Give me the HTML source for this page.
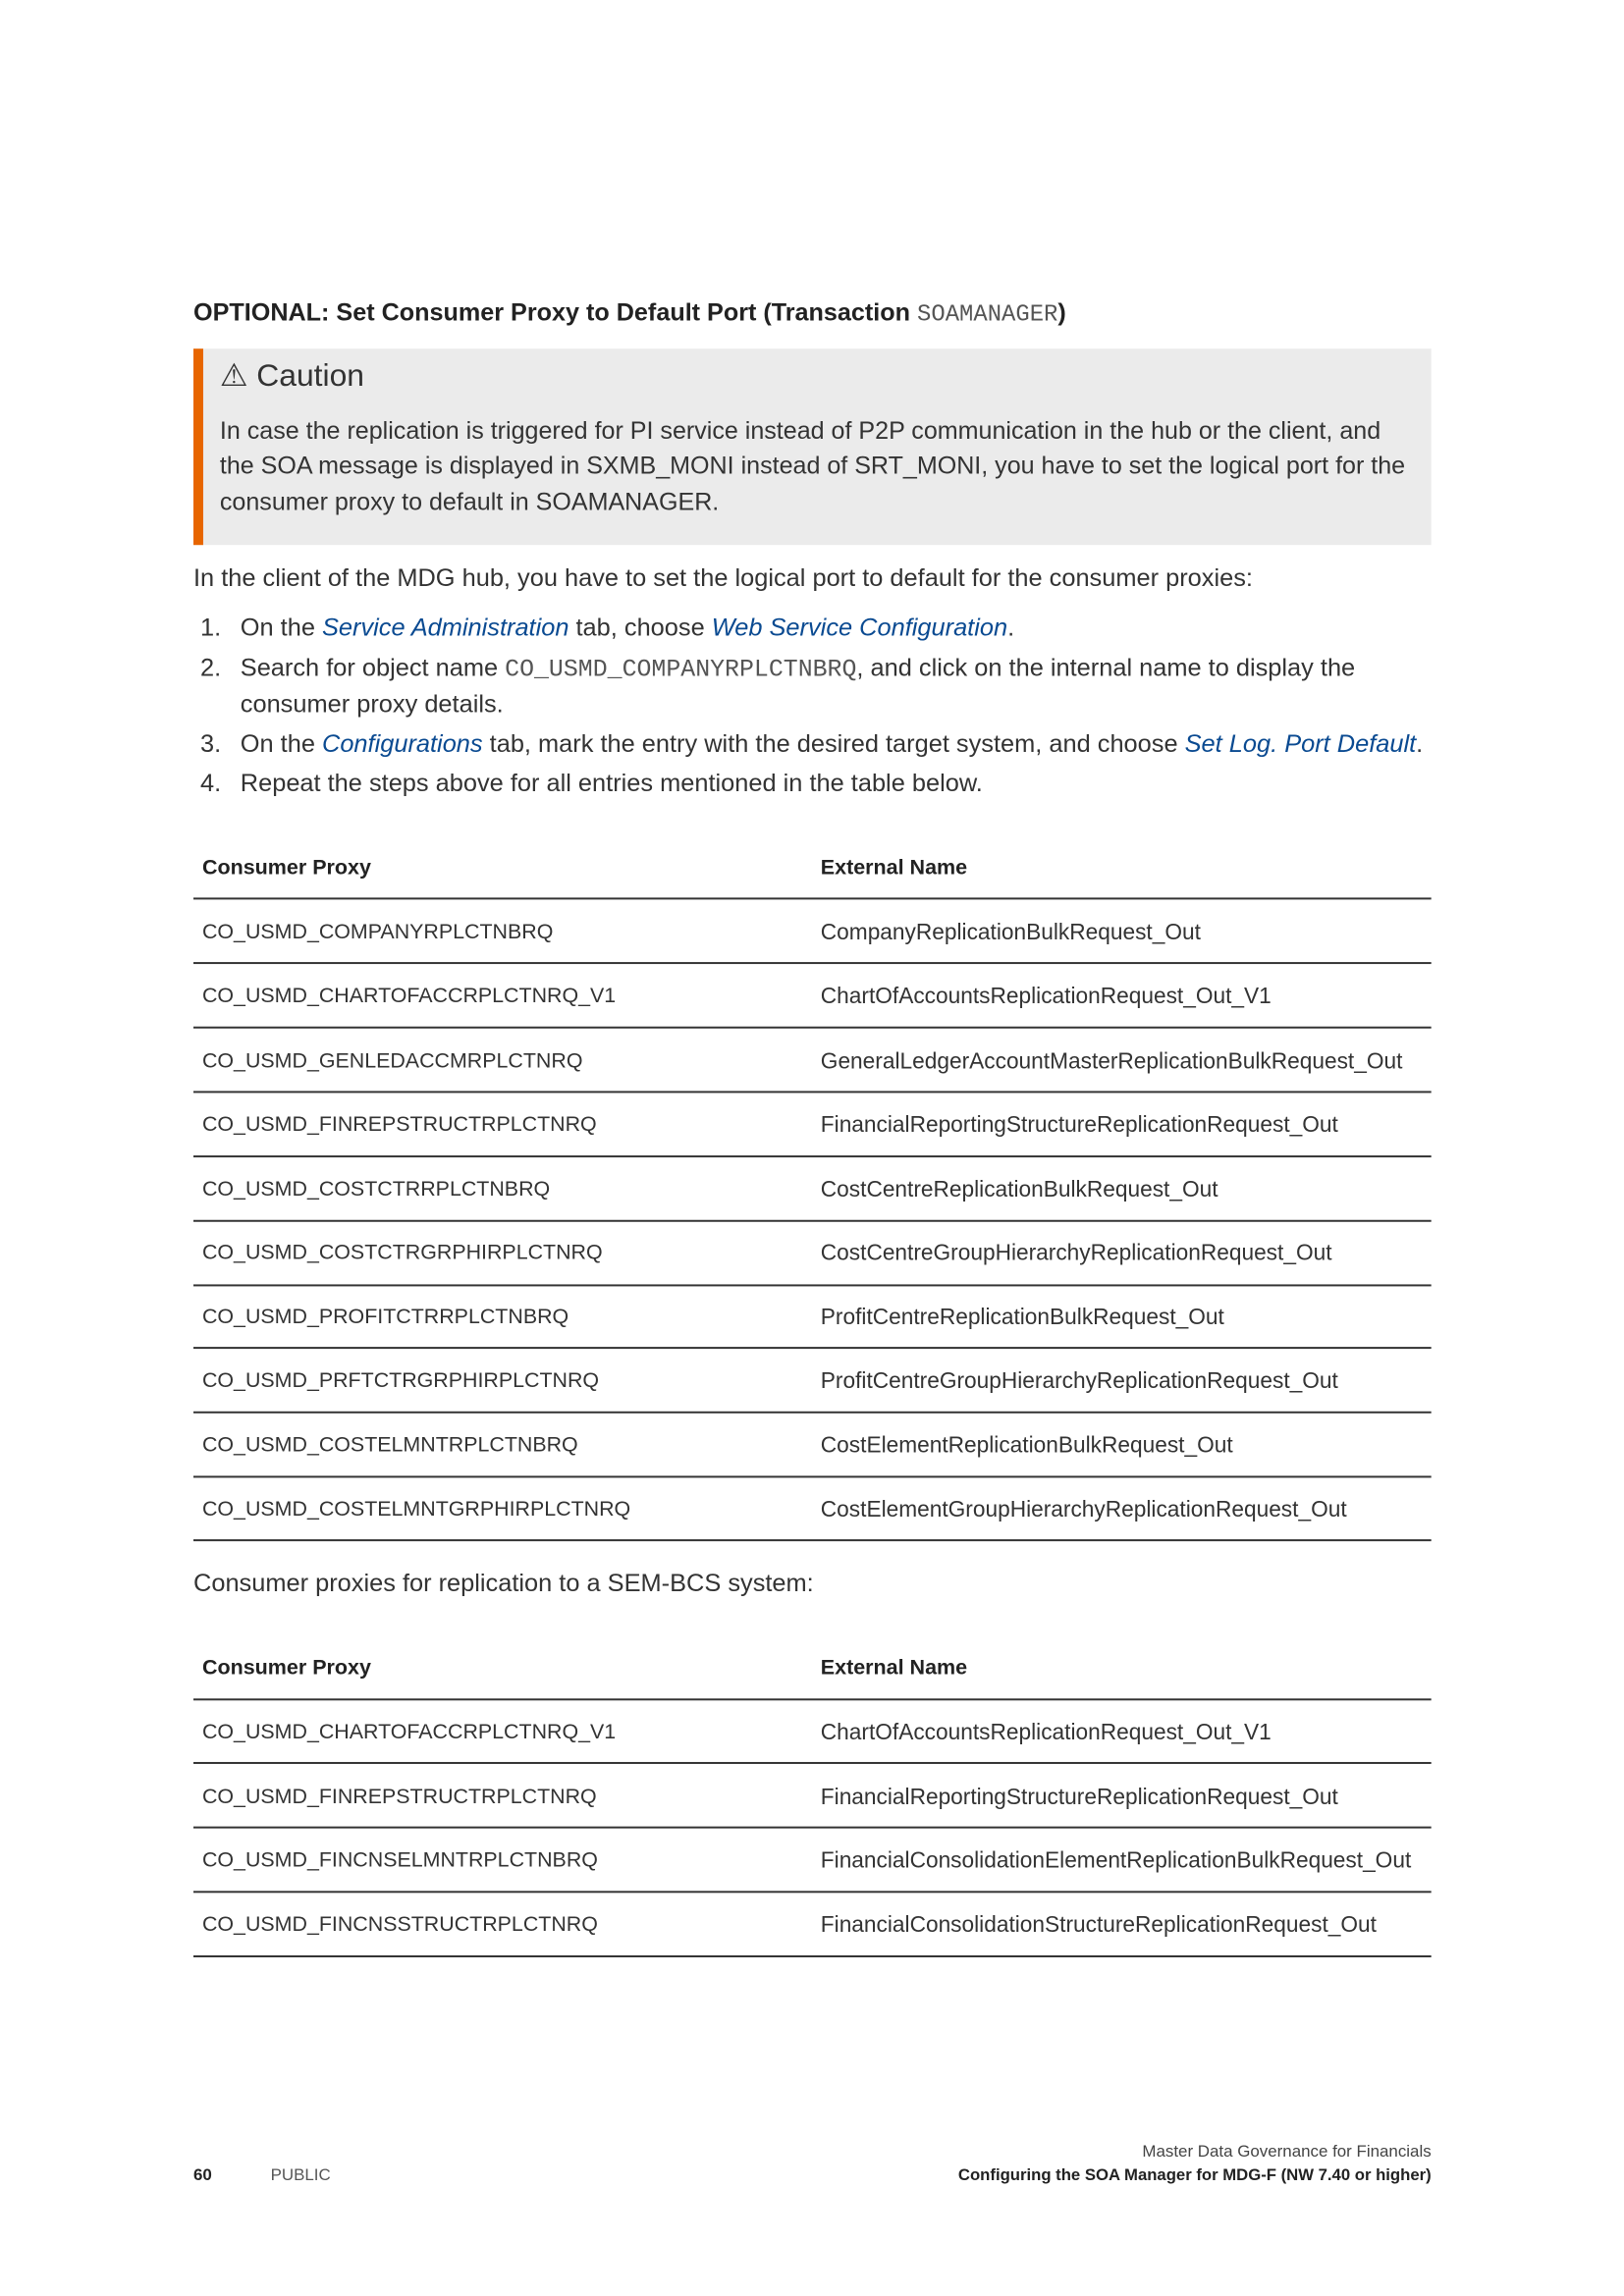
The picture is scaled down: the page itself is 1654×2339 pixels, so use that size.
<!DOCTYPE html>
<html><head><meta charset="utf-8">
<style>
body{margin:0;background:#fff;overflow:hidden;}
#p{position:relative;width:1654px;height:2339px;font-family:"Liberation Sans",sans-serif;color:#333;transform:scale(0.995);transform-origin:0 0;}
.t{position:absolute;white-space:nowrap;height:36px;line-height:36px;}
.m{font-family:"Liberation Mono",monospace;color:#555;font-size:25px;}
.l{color:#0a4a91;font-style:italic;}
.h{position:absolute;left:198px;width:1267px;height:2px;background:#333;}
.c{font-size:22.8px;}
.c1{font-size:21.5px;}
.hd{font-size:21.6px;font-weight:bold;color:#222;}
.b{font-weight:bold;}
.x{font-size:25.5px;}
.y{font-size:25.2px;}
</style></head><body><div id="p">
<div class="t b" style="left:198px;top:302px;font-size:25.3px;color:#222">OPTIONAL: Set Consumer Proxy to Default Port (Transaction <span class="m" style="font-weight:normal;font-size:24px">SOAMANAGER</span>)</div>
<div style="position:absolute;left:198px;top:357px;width:1267px;height:201px;background:#ebebeb"></div>
<div style="position:absolute;left:198px;top:357px;width:10px;height:201px;background:#e76500"></div>
<div class="t" style="left:225px;top:364px;font-size:32px;height:40px;line-height:40px">⚠ Caution</div>
<div class="t y" style="left:225px;top:423px">In case the replication is triggered for PI service instead of P2P communication in the hub or the client, and</div>
<div class="t y" style="left:225px;top:459px">the SOA message is displayed in SXMB_MONI instead of SRT_MONI, you have to set the logical port for the</div>
<div class="t y" style="left:225px;top:496px">consumer proxy to default in SOAMANAGER.</div>
<div class="t x" style="left:198px;top:574px">In the client of the MDG hub, you have to set the logical port to default for the consumer proxies:</div>
<div class="t x" style="left:205px;top:625px">1.</div>
<div class="t x" style="left:246px;top:625px">On the <span class="l">Service Administration</span> tab, choose <span class="l">Web Service Configuration</span>.</div>
<div class="t x" style="left:205px;top:666px">2.</div>
<div class="t x" style="left:246px;top:666px">Search for object name <span class="m">CO_USMD_COMPANYRPLCTNBRQ</span>, and click on the internal name to display the</div>
<div class="t x" style="left:246px;top:703px">consumer proxy details.</div>
<div class="t x" style="left:205px;top:744px">3.</div>
<div class="t x" style="left:246px;top:744px">On the <span class="l">Configurations</span> tab, mark the entry with the desired target system, and choose <span class="l">Set Log. Port Default</span>.</div>
<div class="t x" style="left:205px;top:784px">4.</div>
<div class="t x" style="left:246px;top:784px">Repeat the steps above for all entries mentioned in the table below.</div>

<div class="t hd" style="left:207px;top:870px">Consumer Proxy</div>
<div class="t hd" style="left:840px;top:870px">External Name</div>
<div class="h" style="top:919px"></div>
<div class="t c1" style="left:207px;top:936px">CO_USMD_COMPANYRPLCTNBRQ</div><div class="t c" style="left:840px;top:936px">CompanyReplicationBulkRequest_Out</div>
<div class="h" style="top:985px"></div>
<div class="t c1" style="left:207px;top:1001px">CO_USMD_CHARTOFACCRPLCTNRQ_V1</div><div class="t c" style="left:840px;top:1001px">ChartOfAccountsReplicationRequest_Out_V1</div>
<div class="h" style="top:1051px"></div>
<div class="t c1" style="left:207px;top:1068px">CO_USMD_GENLEDACCMRPLCTNRQ</div><div class="t c" style="left:840px;top:1068px">GeneralLedgerAccountMasterReplicationBulkRequest_Out</div>
<div class="h" style="top:1117px"></div>
<div class="t c1" style="left:207px;top:1133px">CO_USMD_FINREPSTRUCTRPLCTNRQ</div><div class="t c" style="left:840px;top:1133px">FinancialReportingStructureReplicationRequest_Out</div>
<div class="h" style="top:1183px"></div>
<div class="t c1" style="left:207px;top:1199px">CO_USMD_COSTCTRRPLCTNBRQ</div><div class="t c" style="left:840px;top:1199px">CostCentreReplicationBulkRequest_Out</div>
<div class="h" style="top:1249px"></div>
<div class="t c1" style="left:207px;top:1264px">CO_USMD_COSTCTRGRPHIRPLCTNRQ</div><div class="t c" style="left:840px;top:1264px">CostCentreGroupHierarchyReplicationRequest_Out</div>
<div class="h" style="top:1315px"></div>
<div class="t c1" style="left:207px;top:1330px">CO_USMD_PROFITCTRRPLCTNBRQ</div><div class="t c" style="left:840px;top:1330px">ProfitCentreReplicationBulkRequest_Out</div>
<div class="h" style="top:1379px"></div>
<div class="t c1" style="left:207px;top:1395px">CO_USMD_PRFTCTRGRPHIRPLCTNRQ</div><div class="t c" style="left:840px;top:1395px">ProfitCentreGroupHierarchyReplicationRequest_Out</div>
<div class="h" style="top:1445px"></div>
<div class="t c1" style="left:207px;top:1461px">CO_USMD_COSTELMNTRPLCTNBRQ</div><div class="t c" style="left:840px;top:1461px">CostElementReplicationBulkRequest_Out</div>
<div class="h" style="top:1511px"></div>
<div class="t c1" style="left:207px;top:1527px">CO_USMD_COSTELMNTGRPHIRPLCTNRQ</div><div class="t c" style="left:840px;top:1527px">CostElementGroupHierarchyReplicationRequest_Out</div>
<div class="h" style="top:1576px"></div>

<div class="t x" style="left:198px;top:1603px">Consumer proxies for replication to a SEM-BCS system:</div>

<div class="t hd" style="left:207px;top:1689px">Consumer Proxy</div>
<div class="t hd" style="left:840px;top:1689px">External Name</div>
<div class="h" style="top:1739px"></div>
<div class="t c1" style="left:207px;top:1755px">CO_USMD_CHARTOFACCRPLCTNRQ_V1</div><div class="t c" style="left:840px;top:1755px">ChartOfAccountsReplicationRequest_Out_V1</div>
<div class="h" style="top:1804px"></div>
<div class="t c1" style="left:207px;top:1821px">CO_USMD_FINREPSTRUCTRPLCTNRQ</div><div class="t c" style="left:840px;top:1821px">FinancialReportingStructureReplicationRequest_Out</div>
<div class="h" style="top:1870px"></div>
<div class="t c1" style="left:207px;top:1886px">CO_USMD_FINCNSELMNTRPLCTNBRQ</div><div class="t c" style="left:840px;top:1886px">FinancialConsolidationElementReplicationBulkRequest_Out</div>
<div class="h" style="top:1936px"></div>
<div class="t c1" style="left:207px;top:1952px">CO_USMD_FINCNSSTRUCTRPLCTNRQ</div><div class="t c" style="left:840px;top:1952px">FinancialConsolidationStructureReplicationRequest_Out</div>
<div class="h" style="top:2002px"></div>

<div class="t" style="right:189px;top:2185px;font-size:17px;color:#444">Master Data Governance for Financials</div>
<div class="t b" style="right:189px;top:2209px;font-size:16.8px;color:#222">Configuring the SOA Manager for MDG-F (NW 7.40 or higher)</div>
<div class="t b" style="left:198px;top:2209px;font-size:17px;color:#222">60</div>
<div class="t" style="left:277px;top:2209px;font-size:17px;color:#555">PUBLIC</div>
</div></body></html>
